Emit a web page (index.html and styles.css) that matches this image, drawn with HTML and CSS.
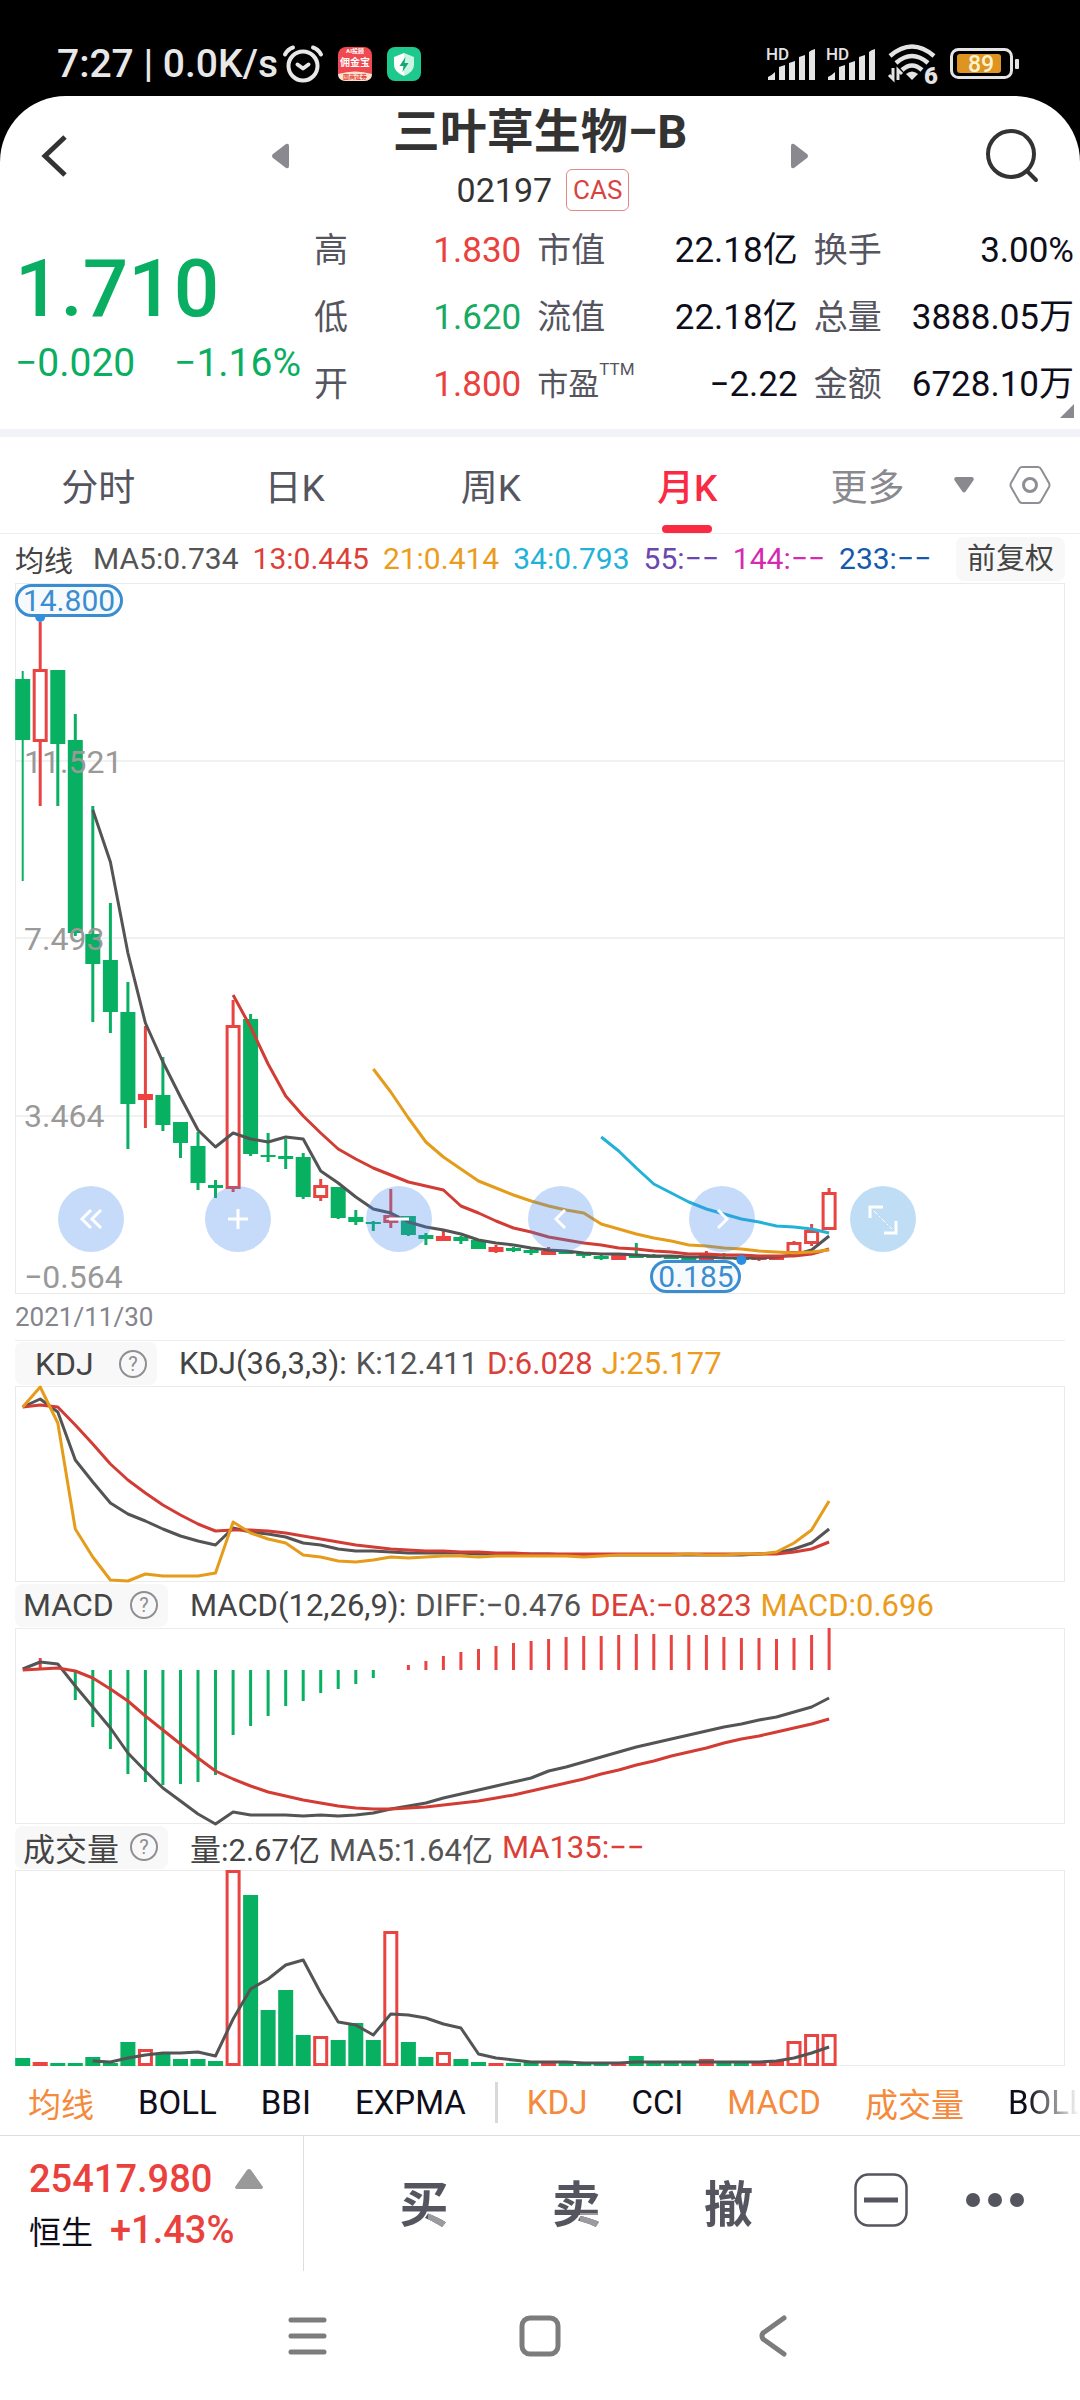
FILE: index.html
```html
<!DOCTYPE html>
<html lang="zh-CN">
<head>
  <meta charset="utf-8">
  <meta name="viewport" content="width=device-width, initial-scale=1">
  <title>三叶草生物-B 02197</title>
  <link rel="stylesheet" href="styles.css">
</head>
<body>
  <div class="statusbar">
    <span class="clock">7:27 | 0.0K/s</span>
    <svg class="alarm" width="40" height="38" viewBox="0 0 40 38" fill="none" stroke="#e8e8e8" stroke-width="4" stroke-linecap="round" stroke-linejoin="round">
      <circle cx="20" cy="21" r="14.500"/>
      <path d="M14.500 19.500l5.500 4 5.500-4M2 9.500Q5 4 10 2.500M38 9.500Q35 4 30 2.500"/>
    </svg>
    <svg class="app" width="34" height="34" viewBox="0 0 34 34">
      <rect width="34" height="34" rx="8" fill="#f04a50"/>
      <path d="M0 27Q17 22 34 27Q34 34 26 34H8Q0 34 0 27z" fill="#fde3cf"/>
      <text x="17" y="6" class="app-small" fill="#fff">AI投顾</text>
      <text x="17" y="19" class="app-name" fill="#fff">佣金宝</text>
      <text x="17" y="32" class="app-small" fill="#e2483f">国商证券</text>
    </svg>
    <svg class="app" width="34" height="34" viewBox="0 0 34 34">
      <rect width="34" height="34" rx="8" fill="#1ec98d"/>
      <path d="M17 6l10 4v8q0 7-10 11z" fill="#c9f5e2"/>
      <path d="M17 6L7 10v8q0 7 10 11z" fill="#fff"/>
      <path d="M18.500 10l-6 9h4l-1 6 6-9h-4z" fill="#12a876"/>
    </svg>
    <span class="grow"></span>
    <svg class="signal" width="50" height="34" viewBox="0 0 50 34" fill="#e4e4e4">
      <text x="0" y="13" class="hd">HD</text>
      <path d="M2 33v-3q3-1 7-5v8zM13 33V20q3-1 6-2v15zM23 33V16q3-1 6-2v19zM33 33V10q3-1 6-2v25zM43 33V5q2-2 6-3v31z"/>
    </svg>
    <svg class="signal" width="50" height="34" viewBox="0 0 50 34" fill="#e4e4e4">
      <text x="0" y="13" class="hd">HD</text>
      <path d="M2 33v-3q3-1 7-5v8zM13 33V20q3-1 6-2v15zM23 33V16q3-1 6-2v19zM33 33V10q3-1 6-2v25zM43 33V5q2-2 6-3v31z"/>
    </svg>
    <svg class="wifi" width="52" height="42" viewBox="0 0 52 42" fill="none" stroke="#e4e4e4" stroke-width="4.500">
      <path d="M2 13Q24-6 46 13M8 20Q24 6 40 20M14 27Q24 18 34 27"/>
      <path d="M18 31q6-5 12 0l-6 6z" fill="#e4e4e4" stroke="none"/>
      <path d="M5 25v11l-4-4M10 37V27l4 4" stroke-width="3"/>
      <text x="36" y="41" class="wifi-gen">6</text>
    </svg>
    <svg class="battery" width="70" height="32" viewBox="0 0 70 32">
      <rect x="1.500" y="1.500" width="60" height="28" rx="7" fill="none" stroke="#e4e4e4" stroke-width="3"/>
      <rect x="7" y="6" width="44" height="19" rx="3" fill="#dd9420"/>
      <rect x="65" y="11" width="4" height="10" rx="1" fill="#e4e4e4"/>
      <text x="31" y="24">89</text>
    </svg>
  </div>

  <main class="page">
    <header class="topbar">
      <button class="icon-btn" aria-label="返回">
        <svg width="26" height="42" viewBox="0 0 26 42" fill="none" stroke="#333" stroke-width="5"><path d="M24 2L4 21l20 19"/></svg>
      </button>
      <div class="switcher">
        <button aria-label="上一只">
          <svg width="18" height="26" viewBox="0 0 18 26"><path d="M15 1L2 11q-2 2 0 4l13 10q3 1 3-2V3q0-3-3-2z" fill="#8a8990"/></svg>
        </button>
        <div class="stock">
          <h1>三叶草生物–B</h1>
          <div class="code">02197<span class="tag">CAS</span></div>
        </div>
        <button aria-label="下一只">
          <svg width="18" height="26" viewBox="0 0 18 26"><path d="M3 1l13 10q2 2 0 4L3 25q-3 1-3-2V3Q0 0 3 1z" fill="#8a8990"/></svg>
        </button>
      </div>
      <button class="icon-btn search" aria-label="搜索">
        <svg width="54" height="56" viewBox="0 0 54 56" fill="none" stroke="#333" stroke-width="4" stroke-linecap="round"><circle cx="26" cy="26" r="23"/><path d="M42 43l9 9"/></svg>
      </button>
    </header>

    <section class="quote">
      <div class="price">
        <div class="last">1.710</div>
        <div class="change"><span>−0.020</span><span>−1.16%</span></div>
      </div>
      <dl class="stats">
        <div><dt>高</dt><dd class="up">1.830</dd></div>
        <div><dt>市值</dt><dd>22.18亿</dd></div>
        <div><dt>换手</dt><dd>3.00%</dd></div>
        <div><dt>低</dt><dd class="down">1.620</dd></div>
        <div><dt>流值</dt><dd>22.18亿</dd></div>
        <div><dt>总量</dt><dd>3888.05万</dd></div>
        <div><dt>开</dt><dd class="up">1.800</dd></div>
        <div><dt class="ttm">市盈<sup>TTM</sup></dt><dd>−2.22</dd></div>
        <div><dt>金额</dt><dd>6728.10万</dd></div>
      </dl>
      <i class="corner"></i>
    </section>

    <nav class="periods">
      <button>分时</button>
      <button>日K</button>
      <button>周K</button>
      <button class="active">月K</button>
      <div class="more">
        <button>更多
          <svg width="20" height="16" viewBox="0 0 20 16"><path d="M2 0h16q3 1 1 4l-7 10q-2 3-4 0L1 4Q-1 1 2 0z" fill="#8a8990"/></svg>
        </button>
        <button aria-label="设置">
          <svg width="42" height="38" viewBox="0 0 42 38" fill="none" stroke="#8f8e94" stroke-width="2"><path d="M13 1h16q2 0 3 2l8 14q1 2 0 4l-8 14q-1 2-3 2H13q-2 0-3-2L2 21q-1-2 0-4l8-14q1-2 3-2z"/><circle cx="21" cy="19" r="6.500" stroke-width="3"/></svg>
        </button>
      </div>
    </nav>

    <section class="charts">
      <div class="legend ma-legend">
        <span class="name">均线</span>
        <span class="c-dark">MA5:0.734</span>
        <span class="c-red">13:0.445</span>
        <span class="c-gold">21:0.414</span>
        <span class="c-cyan">34:0.793</span>
        <span class="c-purple">55:−−</span>
        <span class="c-pink">144:−−</span>
        <span class="c-blue">233:−−</span>
        <button class="adjust">前复权</button>
      </div>
      <div class="plot">
        <svg id="candles" viewBox="0 0 1050 711"></svg>
        <div class="tools">
          <button aria-label="最左"><svg viewBox="0 0 66 66"><path d="M33 24l-9 9 9 9M43 24l-9 9 9 9"/></svg></button>
          <button aria-label="放大"><svg viewBox="0 0 66 66"><path d="M33 23v20M23 33h20"/></svg></button>
          <button aria-label="缩小"><svg viewBox="0 0 66 66"><path d="M23 33h20"/></svg></button>
          <button aria-label="左移"><svg viewBox="0 0 66 66"><path d="M37 24l-9 9 9 9"/></svg></button>
          <button aria-label="右移"><svg viewBox="0 0 66 66"><path d="M29 24l9 9-9 9"/></svg></button>
          <button class="full" aria-label="全屏"><svg viewBox="0 0 66 66"><path d="M20 32V21h13M46 35v12H34"/><path d="M24 25l18 18" stroke-dasharray="5 2 2 2" class="thin"/></svg></button>
        </div>
      </div>
      <div class="date">2021/11/30</div>

      <div class="legend sub first">
        <button class="picker kdj">KDJ<i class="help">?</i></button>
        <span class="name">KDJ(36,3,3):</span>
        <span class="c-dark">K:12.411</span>
        <span class="c-red">D:6.028</span>
        <span class="c-gold">J:25.177</span>
      </div>
      <svg id="kdj" viewBox="0 0 1050 196"></svg>

      <div class="legend sub">
        <button class="picker">MACD<i class="help">?</i></button>
        <span class="name">MACD(12,26,9):</span>
        <span class="c-dark">DIFF:−0.476</span>
        <span class="c-red">DEA:−0.823</span>
        <span class="c-gold">MACD:0.696</span>
      </div>
      <svg id="macd" viewBox="0 0 1050 196"></svg>

      <div class="legend sub">
        <button class="picker">成交量<i class="help">?</i></button>
        <span class="name">量:2.67亿</span>
        <span class="c-dark">MA5:1.64亿</span>
        <span class="c-red">MA135:−−</span>
      </div>
      <svg id="volume" viewBox="0 0 1050 196"></svg>
    </section>

    <nav class="indicators">
      <button class="on">均线</button>
      <button>BOLL</button>
      <button>BBI</button>
      <button>EXPMA</button>
      <i class="sep"></i>
      <button class="on">KDJ</button>
      <button>CCI</button>
      <button class="on">MACD</button>
      <button class="on">成交量</button>
      <button class="fade">BOLL</button>
    </nav>

    <footer class="actions">
      <div class="index">
        <div class="index-row">25417.980
          <svg width="28" height="20" viewBox="0 0 28 20"><path d="M12 1q2-2 4 0l12 17q0 2-2 2H2q-2 0-2-2z" fill="#999"/></svg>
        </div>
        <div class="index-row"><span class="index-name">恒生</span>+1.43%</div>
      </div>
      <div class="trade">
        <button class="cut">买</button>
        <button class="cut">卖</button>
        <button>撤</button>
        <button aria-label="收起">
          <svg width="54" height="54" viewBox="0 0 54 54" fill="none" stroke="#54555f"><rect x="1.500" y="1.500" width="51" height="51" rx="13" stroke-width="2.500"/><path d="M10 27h34" stroke-width="5"/></svg>
        </button>
        <button aria-label="更多操作">
          <svg width="60" height="16" viewBox="0 0 60 16" fill="#54555f"><circle cx="8" cy="8" r="7"/><circle cx="30" cy="8" r="7"/><circle cx="52" cy="8" r="7"/></svg>
        </button>
      </div>
    </footer>

    <div class="sysnav">
      <button aria-label="菜单"><svg width="40" height="40" viewBox="0 0 40 40"><path d="M4 4h33M4 20h33M4 36h33"/></svg></button>
      <button aria-label="主页"><svg width="42" height="42" viewBox="0 0 42 42"><rect x="3" y="3" width="36" height="36" rx="8"/></svg></button>
      <button aria-label="后退"><svg width="28" height="42" viewBox="0 0 28 42"><path d="M25 3L4 18q-2 3 0 6l21 15"/></svg></button>
    </div>
  </main>
  <script src="charts.js"></script>
</body>
</html>
```

FILE: styles.css
```css
* {
  box-sizing: border-box;
}

body {
  margin: 0;
  background: #000;
  color: #0e0e1a;
  font-family: Roboto, "Noto Sans CJK SC", sans-serif;
  overflow-x: hidden;
}

button {
  border: none;
  background: none;
  padding: 0;
  margin: 0;
  color: inherit;
  font: inherit;
  cursor: pointer;
}

svg {
  display: block;
  flex: none;
}

h1, dl, dd {
  margin: 0;
}

i {
  font-style: normal;
}

.grow {
  flex: 1;
}

/* status bar */
.statusbar {
  display: flex;
  align-items: center;
  height: 96px;
  padding: 32px 60px 0 57px;
  color: #e8e8e8;
}

.statusbar svg {
  overflow: visible;
}

.clock {
  font-size: 39px;
  font-weight: 500;
  line-height: 48px;
  white-space: pre;
}

.alarm {
  margin-left: 5px;
}

.app {
  margin-left: 15px;
}

.app-name, .app-small {
  font-size: 10px;
  font-weight: 700;
  text-anchor: middle;
}

.app-small {
  font-size: 6px;
}

.hd {
  font-size: 17px;
  font-weight: 500;
}

.signal {
  margin-right: 10px;
}

.wifi {
  margin-left: 2px;
  margin-right: 10px;
}

.wifi-gen {
  font-size: 24px;
  font-weight: 900;
  fill: #e4e4e4;
  stroke: #000;
  stroke-width: 2px;
  paint-order: stroke;
}

.battery text {
  font-size: 23px;
  font-weight: 500;
  fill: #fff3d0;
  text-anchor: middle;
}

.page {
  background: #fff;
  border-radius: 66px 66px 0 0;
}

/* title */
.topbar {
  display: grid;
  grid-template-columns: 1fr 538px 1fr;
  align-items: center;
  height: 119px;
  padding: 0 41px;
}

.switcher {
  display: flex;
  align-items: center;
  justify-content: space-between;
}

.search {
  justify-self: end;
}

.stock {
  text-align: center;
}

.stock h1 {
  font-size: 47px;
  font-weight: 700;
  line-height: 62px;
  color: #333;
  white-space: nowrap;
}

.code {
  display: flex;
  align-items: center;
  justify-content: center;
  gap: 14px;
  font-size: 34px;
  line-height: 42px;
  color: #333;
  padding: 6px 0 0 6px;
}

.tag {
  border: 1px solid #e08a88;
  border-radius: 6px;
  padding: 0 6px;
  font-size: 26px;
  line-height: 40px;
  color: #d9433f;
}

/* quote */
.quote {
  position: relative;
  display: flex;
  padding: 2px 6px 11px 15px;
  border-bottom: 8px solid #f2f3f8;
}

.price {
  width: 299px;
  color: #0aae62;
}

.last {
  font-size: 80px;
  font-weight: 500;
  line-height: 100px;
  padding-top: 22px;
}

.change {
  display: flex;
  justify-content: space-between;
  font-size: 39px;
  line-height: 48px;
  padding-right: 13px;
}

.stats {
  flex: 1;
  display: grid;
  grid-template-columns: 207fr 260fr 260fr;
  column-gap: 16px;
}

.stats div {
  display: flex;
  justify-content: space-between;
  font-size: 35px;
  line-height: 67px;
  white-space: nowrap;
}

.stats dt {
  font-size: 34px;
  color: #55555f;
}

.stats .ttm {
  font-size: 31px;
}

.ttm sup {
  font-size: 17px;
  line-height: 0;
  vertical-align: 20px;
}

.up {
  color: #ea413d;
}

.down {
  color: #16aa62;
}

.corner {
  position: absolute;
  right: 6px;
  bottom: 11px;
  border-left: 14px solid transparent;
  border-bottom: 14px solid #8a8990;
}

/* periods */
.periods {
  display: grid;
  grid-template-columns: repeat(4, 2fr) 3fr;
  height: 97px;
  border-bottom: 1px solid #eee;
  font-size: 37px;
  color: #55555f;
}

.periods .active {
  position: relative;
  color: #fa2a42;
  font-weight: 500;
}

.active::after {
  content: "";
  position: absolute;
  left: 50%;
  bottom: 0;
  width: 50px;
  height: 8px;
  margin-left: -25px;
  border-radius: 4px;
  background: #fa2a42;
}

.more {
  display: flex;
  align-items: center;
  justify-content: space-between;
  padding: 0 29px 0 45px;
  color: #8a8990;
}

.more button {
  display: flex;
  align-items: center;
  gap: 50px;
}

/* charts */
.charts {
  padding: 0 15px;
}

.charts > svg, .plot > svg {
  width: 100%;
  overflow: visible;
}

.legend {
  display: flex;
  align-items: center;
  height: 46px;
  font-size: 31px;
  white-space: nowrap;
  gap: 9px;
}

.ma-legend {
  height: 49px;
  font-size: 30px;
  gap: 14px;
}

.ma-legend .name, .adjust {
  font-size: 29px;
}

.ma-legend .name {
  margin-right: 6px;
}

.sub .name {
  margin-left: 13px;
}

.name {
  color: #444;
}

.c-dark { color: #545454; }
.c-red { color: #db4038; }
.c-gold { color: #eb9c1c; }
.c-cyan { color: #22b2d8; }
.c-purple { color: #6b45b0; }
.c-pink { color: #d42bb0; }
.c-blue { color: #1459ac; }

.adjust {
  margin-left: auto;
  padding: 0 11px;
  line-height: 44px;
  border-radius: 8px;
  background: #f8f8f8;
  color: #444;
}

.picker {
  display: flex;
  align-items: center;
  justify-content: space-between;
  width: 153px;
  height: 43px;
  padding: 0 10px 0 8px;
  border-radius: 8px;
  background: #f8f8f8;
  color: #444;
  font-size: 32px;
}

.picker.kdj {
  width: 142px;
  padding-left: 20px;
}

.help {
  width: 28px;
  height: 28px;
  border: 2px solid #8f8e94;
  border-radius: 50%;
  font-size: 20px;
  line-height: 24px;
  text-align: center;
  color: #8f8e94;
}

.plot {
  position: relative;
}

/* first gap is a little narrower than the others */
.tools {
  position: absolute;
  top: 603px;
  left: 43px;
  right: 149px;
  display: grid;
  grid-template-columns: 147fr repeat(4, 161fr) 66px;
}

.tools button {
  width: 66px;
  height: 66px;
  border-radius: 50%;
  background: rgba(64, 136, 235, 0.3);
}

.tools .full {
  background: rgba(42, 146, 223, 0.3);
}

.tools path {
  fill: none;
  stroke: #fff;
  stroke-width: 3;
}

.tools .thin {
  stroke-width: 1;
}

.date {
  height: 46px;
  line-height: 46px;
  font-size: 26px;
  color: #85858c;
}

.first {
  border-top: 1px solid #eee;
}

.frame, .grid {
  fill: none;
  stroke: #ebebeb;
  stroke-width: 1;
}

.grid {
  stroke-width: 2;
  stroke: #f1f1f1;
}

.line {
  fill: none;
  stroke-width: 3;
  stroke-linejoin: round;
}

.line.dark { stroke: #545454; }
.line.red { stroke: #d23c34; }
.line.gold { stroke: #e59c1a; }
.line.cyan { stroke: #22b2d8; }

.g {
  fill: #08b062;
  stroke: #08b062;
}

.r {
  fill: #f2413f;
  stroke: #e84442;
}

.h {
  fill: #fff;
  stroke: #e84442;
}

.axis {
  font-size: 32px;
  fill: #999;
}

.mark rect {
  fill: #f7fafc;
  stroke: #3a8dd0;
  stroke-width: 3;
}

.mark text {
  font-size: 30px;
  fill: #3a8dd0;
  text-anchor: middle;
}

.mark circle {
  fill: #2c8ee0;
}

/* indicators */
.indicators {
  display: flex;
  align-items: center;
  gap: 44px;
  height: 70px;
  padding: 4px 0 0 28px;
  overflow: hidden;
  border-bottom: 1px solid #dedede;
  font-size: 33px;
  white-space: nowrap;
}

.indicators .on {
  color: #f58a3c;
}

.sep {
  flex: none;
  width: 3px;
  height: 41px;
  margin: 0 -15px;
  background: #d9d9d9;
}

.indicators .fade {
  background: linear-gradient(90deg, #0e0e1a 25%, #fff 90%);
  background-clip: text;
  -webkit-background-clip: text;
  color: transparent;
}

/* bottom */
.actions {
  display: flex;
  height: 135px;
}

.index {
  width: 304px;
  border-right: 1px solid #dedede;
  padding: 17px 0 0 29px;
  color: #ea413d;
  font-size: 38px;
  font-weight: 500;
}

.index-row {
  display: flex;
  align-items: center;
  gap: 23px;
  height: 51px;
}

.index-name {
  margin-right: -6px;
  font-size: 32px;
  font-weight: 400;
  color: #0e0e1a;
}

.trade {
  flex: 1;
  display: grid;
  grid-template-columns: repeat(4, 2fr) 1fr;
  align-items: center;
  padding: 0 47px 7px 44px;
  color: #54555f;
  font-size: 49px;
  font-weight: 700;
}

.trade svg {
  margin: auto;
}

/* lighter last stroke */
.trade .cut {
  background: linear-gradient(#9b9b9f, #9b9b9f) 80px 48px / 40px 40px no-repeat, #54555f;
  background-clip: text;
  -webkit-background-clip: text;
  color: transparent;
}

.sysnav {
  display: grid;
  grid-template-columns: repeat(3, 233px);
  justify-content: center;
  align-items: center;
  height: 130px;
}

.sysnav svg {
  margin: auto;
  fill: none;
  stroke: #7c7c7c;
  stroke-width: 5;
  stroke-linecap: round;
}
```

FILE: charts.js
```js
var STEP = 17.53;
var LEFT = 7.7;
var BAR = 15;

function x(i) {
  return (LEFT + STEP * i).toFixed(1);
}

function line(start, ys, color) {
  var pts = ys.map(function (y, i) { return x(start + i) + ',' + y; });
  return '<polyline class="line ' + color + '" points="' + pts.join(' ') + '"/>';
}

function frame(h) {
  return '<rect class="frame" x="0.5" y="0.5" width="1049" height="' + (h - 1) + '"/>';
}

// type: g = down, r = up (small), h = up (hollow)
function box(i, top, bottom, type) {
  var w = type === 'g' ? 0 : type === 'h' ? 3 : 1;
  var h = Math.max(bottom - top, 2);
  return '<rect class="' + type + '" stroke-width="' + w + '" x="' + (x(i) - BAR / 2 + w / 2) +
    '" y="' + (top + w / 2) + '" width="' + (BAR - w) + '" height="' + Math.max(h - w, 1) + '"/>';
}

function wick(i, from, to, type, width) {
  return '<path class="' + type + '" stroke-width="' + (width || 3) + '" d="M' + x(i) + ' ' + from + 'V' + to + '"/>';
}

// high, top, bottom, low, type
var candles = [
  [88, 96, 157, 298, 'g'], [39, 86, 159, 223, 'h'], [87, 87, 161, 223, 'g'], [131, 157, 350, 353, 'g'],
  [223, 351, 381, 439, 'g'], [320, 377, 429, 450, 'g'], [399, 429, 521, 566, 'g'], [443, 511, 517, 545, 'r'],
  [474, 512, 542, 548, 'g'], [539, 539, 560, 575, 'g'], [549, 563, 600, 607, 'g'], [597, 602, 605, 615, 'g'],
  [417, 442, 606, 609, 'h'], [431, 436, 571, 573, 'g'], [550, 572, 574, 579, 'g'], [556, 573, 576, 586, 'g'],
  [570, 574, 614, 616, 'g'], [596, 602, 615, 618, 'h'], [604, 604, 635, 636, 'g'], [627, 634, 639, 642, 'g'],
  [638, 639, 641, 648, 'g'], [606, 632, 640, 645, 'h'], [633, 633, 652, 653, 'g'], [650, 652, 656, 662, 'g'],
  [647, 653, 658, 658, 'r'], [653, 654, 658, 661, 'g'], [657, 657, 666, 666, 'g'], [662, 664, 669, 670, 'r'],
  [664, 665, 668, 669, 'g'], [666, 667, 670, 672, 'g'], [664, 668, 672, 672, 'r'], [668, 668, 671, 671, 'g'],
  [670, 670, 673, 675, 'g'], [672, 673, 676, 677, 'g'], [672, 672, 677, 677, 'r'], [660, 673, 675, 675, 'g'],
  [671, 673, 675, 675, 'g'], [674, 674, 676, 676, 'g'], [674, 674, 677, 677, 'g'], [668, 670, 677, 677, 'r'],
  [670, 671, 673, 674, 'g'], [674, 675, 677, 677, 'g'], [674, 675, 677, 678, 'r'], [672, 672, 677, 677, 'r'],
  [658, 659, 671, 671, 'h'], [641, 647, 661, 663, 'h'], [605, 609, 647, 647, 'h']
];

var ma5 = [227, 279, 370, 440, 479, 514, 547, 564, 550, 556, 559, 554, 556, 588, 600, 614, 626, 630, 639, 644,
  647, 651, 657, 660, 662, 665, 667, 668, 670, 671, 671, 672, 673, 673, 674, 674, 675, 675, 675, 674, 672, 667, 653];
var ma13 = [412, 444, 481, 513, 533, 550, 566, 576, 585, 592, 599, 603, 607, 623, 630, 638, 645, 649, 654, 657,
  660, 662, 665, 666, 668, 669, 671, 671, 672, 672, 673, 673, 673, 671, 666];
var ma21 = [486, 509, 535, 559, 574, 586, 598, 605, 612, 618, 623, 627, 630, 641, 646, 651, 655, 658, 662, 663,
  665, 666, 668, 669, 670, 669, 667];
var ma34 = [554, 568, 585, 601, 610, 619, 626, 631, 636, 639, 643, 644, 646, 650];

function drawCandles() {
  var s = frame(711);
  [178, 355, 533].forEach(function (y) {
    s += '<path class="grid" d="M1 ' + y + 'H1049"/>';
  });
  candles.forEach(function (c, i) {
    s += wick(i, c[0], c[3], c[4], i === 0 ? 2 : 3) + box(i, c[1], c[2], c[4]);
  });
  s += line(4, ma5, 'dark') + line(12, ma13, 'red') + line(20, ma21, 'gold') + line(33, ma34, 'cyan');
  [['11.521', 190], ['7.493', 367], ['3.464', 544], ['−0.564', 705]].forEach(function (a) {
    s += '<text class="axis" x="9" y="' + a[1] + '">' + a[0] + '</text>';
  });
  s += '<g class="mark"><circle cx="' + x(1) + '" cy="34" r="5"/>' +
    '<rect x="1.5" y="2.500" width="105" height="30" rx="15"/><text x="54" y="28">14.800</text></g>';
  s += '<g class="mark"><rect x="636.5" y="678.500" width="88" height="30" rx="15"/>' +
    '<text x="681" y="704">0.185</text><circle cx="' + x(41) + '" cy="677" r="5"/></g>';
  document.getElementById('candles').innerHTML = s;
}

var k = [21, 13, 26, 74, 96, 117, 128, 135, 143, 150, 155, 159, 142, 146, 148, 151, 157, 159, 163, 165, 165, 166,
  167, 167, 167, 167, 168, 168, 168, 168, 168, 169, 169, 169, 169, 169, 169, 169, 169, 169, 169, 169, 168, 167, 163, 157, 143];
var d = [21, 19, 21, 39, 58, 78, 94, 107, 119, 129, 138, 145, 144, 144, 145, 147, 150, 153, 156, 159, 161, 163,
  164, 165, 165, 166, 166, 167, 167, 168, 168, 168, 168, 168, 168, 168, 168, 168, 168, 168, 168, 168, 168, 168, 166, 163, 156];
var j = [21, 1, 37, 143, 171, 194, 195, 188, 190, 190, 190, 187, 136, 147, 153, 157, 169, 171, 175, 176, 174, 171,
  172, 171, 170, 170, 171, 170, 170, 170, 170, 170, 171, 170, 169, 169, 169, 169, 168, 169, 169, 168, 168, 166, 157, 144, 115];

function drawKdj() {
  document.getElementById('kdj').innerHTML = frame(196) + line(0, k, 'dark') + line(0, d, 'red') + line(0, j, 'gold');
}

var ZERO = 42;
var hist = [42, 30, 42, 72, 99, 121, 146, 154, 157, 156, 154, 147, 107, 98, 88, 78, 73, 65, 61, 56, 50, 42,
  37, 33, 28, 24, 21, 18, 15, 13, 11, 9, 8, 8, 7, 6, 6, 7, 7, 7, 9, 10, 10, 11, 10, 7, 0];
var diff = [41, 34, 36, 58, 79, 100, 125, 143, 160, 173, 186, 196, 184, 187, 187, 187, 188, 187, 188, 187, 185, 181,
  178, 175, 170, 166, 162, 158, 154, 150, 143, 139, 134, 129, 124, 119, 115, 111, 107, 103, 99, 96, 92, 89, 84, 79, 70];
var dea = [42, 41, 40, 43, 50, 61, 73, 88, 102, 116, 130, 143, 151, 158, 164, 168, 172, 175, 178, 180, 181, 181,
  180, 179, 177, 175, 173, 170, 167, 163, 159, 155, 151, 146, 142, 137, 133, 128, 124, 120, 115, 111, 108, 104, 100, 96, 91];

function drawMacd() {
  var s = frame(196);
  hist.forEach(function (y, i) {
    if (y !== ZERO) s += wick(i, ZERO, y, y > ZERO ? 'g' : 'r');
  });
  document.getElementById('macd').innerHTML = s + line(0, diff, 'dark') + line(0, dea, 'red');
}

var vol = [188, 192, 193, 193, 187, 193, 172, 179, 184, 189, 189, 191, 0, 25, 140, 120, 165, 166, 170, 153, 170, 61,
  172, 187, 182, 189, 192, 193, 193, 192, 191, 193, 193, 193, 193, 186, 192, 192, 192, 189, 192, 192, 192, 191, 171, 164, 164];
var volType = 'grggggghgggghgggghggghgghggrggrgggrggggrggrrhhh';
var volMa5 = [191, 192, 188, 185, 183, 183, 182, 186, 149, 119, 109, 95, 90, 123, 152, 155, 165, 144, 145, 148,
  154, 158, 184, 188, 190, 192, 192, 192, 193, 193, 193, 192, 192, 192, 192, 192, 192, 192, 192, 191, 188, 183, 177];

function drawVolume() {
  var s = frame(196);
  vol.forEach(function (y, i) {
    s += box(i, y, 196, volType[i]);
  });
  document.getElementById('volume').innerHTML = s + line(4, volMa5, 'dark');
}

drawCandles();
drawKdj();
drawMacd();
drawVolume();
```
